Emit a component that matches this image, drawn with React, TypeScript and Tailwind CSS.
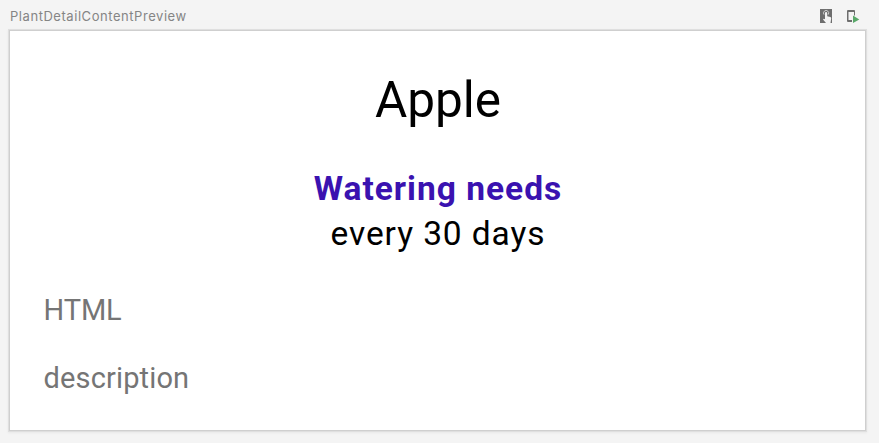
export default function App() {
  return (
    <div className="flex h-[443px] w-[879px] flex-col overflow-hidden bg-[#f4f4f4] font-['Roboto',sans-serif]">
      <header className="flex h-[31px] shrink-0 items-center justify-between pt-px pr-[19px] pl-[10px]">
        <span className="font-['Inter',sans-serif] text-[13px] leading-4 tracking-[0.55px] text-[#858585]">PlantDetailContentPreview</span>
        <div className="flex items-center gap-[13px]">
          <svg width="14" height="14" viewBox="0 0 14 14">
            <path fill="#6e6e6e" d="M1 0h12v14H1z" />
            <path fill="#f4f4f4" d="M6 4a1.1 1.1 0 0 1 2.2 0v3.2l3.2.9q.8.2.8 1.1L11.5 14H7L4 10.5l.7-.8 1.3.6z" />
            <path fill="none" stroke="#d8d8d8" strokeWidth=".9" d="M5 5.6a2.6 2.6 0 1 1 4.2 0" />
          </svg>
          <svg width="14" height="14" viewBox="0 0 14 14">
            <path fill="#6e6e6e" fillRule="evenodd" d="M1 2q0-1 1-1h6q1 0 1 1v4.5H8V3H2.5v8H6v2H2q-1 0-1-1z" />
            <path fill="#59a869" d="M7 6.5l6.3 4L7 14z" />
          </svg>
        </div>
      </header>
      <main className="ml-[10px] flex h-[399px] w-[855px] shrink-0 flex-col bg-white shadow-[0_0_0_1px_#cfcfcf,0_0_0_2px_#dfdfdf,0_1px_2px_2px_#e8e8e8]">
        <h1 className="mt-[39px] pl-px text-center text-[49.5px] leading-[60px] text-black">Apple</h1>
        <h2 className="mt-[39px] pl-px text-center text-[33.5px] leading-[40px] font-bold tracking-[1px] text-[#3a12b0]">Watering needs</h2>
        <p className="mt-[5px] pl-px text-center text-[33.5px] leading-[40px] tracking-[0.9px] text-black">every 30 days</p>
        <p className="mt-[39px] ml-[33.5px] text-[29px] leading-[34px] tracking-[-0.1px] text-[#757575]">HTML</p>
        <p className="mt-[34px] ml-[33.5px] text-[29px] leading-[34px] tracking-[0.15px] text-[#757575]">description</p>
      </main>
    </div>
  );
}
